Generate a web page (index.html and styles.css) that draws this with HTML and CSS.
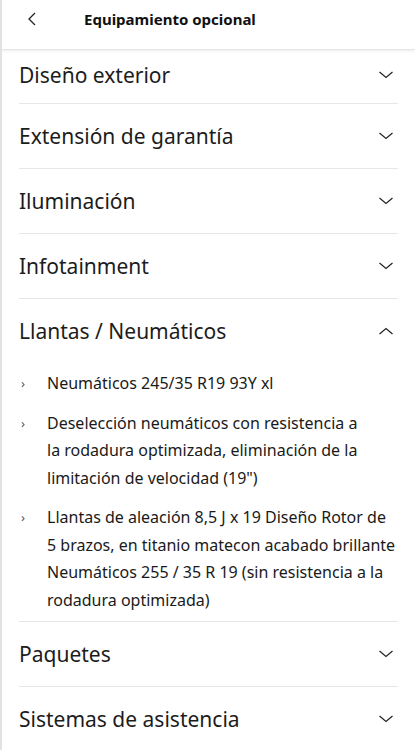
FILE: index.html
```html
<!DOCTYPE html>
<html lang="es">
<head>
    <meta charset="UTF-8">
    <meta name="viewport" content="width=device-width, initial-scale=1.0">
    <title>Equipamiento opcional</title>
    <link rel="stylesheet" href="styles.css">
</head>
<body>
    <header class="top-bar">
        <button class="back" aria-label="Volver">
            <svg width="10" height="14" viewBox="0 0 10 14"><path d="M8 1 L2 7 L8 13" fill="none" stroke="#222" stroke-width="1.3"/></svg>
        </button>
        <h1>Equipamiento opcional</h1>
    </header>

    <main class="list">
        <div class="section first">
            <div class="section-head">
                <span>Diseño exterior</span>
                <svg class="chev" width="16" height="10" viewBox="0 0 16 10"><path d="M1.5 2 L8 7.5 L14.5 2" fill="none" stroke="#222" stroke-width="1.2"/></svg>
            </div>
        </div>
        <div class="section">
            <div class="section-head">
                <span>Extensión de garantía</span>
                <svg class="chev" width="16" height="10" viewBox="0 0 16 10"><path d="M1.5 2 L8 7.5 L14.5 2" fill="none" stroke="#222" stroke-width="1.2"/></svg>
            </div>
        </div>
        <div class="section">
            <div class="section-head">
                <span>Iluminación</span>
                <svg class="chev" width="16" height="10" viewBox="0 0 16 10"><path d="M1.5 2 L8 7.5 L14.5 2" fill="none" stroke="#222" stroke-width="1.2"/></svg>
            </div>
        </div>
        <div class="section">
            <div class="section-head">
                <span>Infotainment</span>
                <svg class="chev" width="16" height="10" viewBox="0 0 16 10"><path d="M1.5 2 L8 7.5 L14.5 2" fill="none" stroke="#222" stroke-width="1.2"/></svg>
            </div>
        </div>
        <div class="section open">
            <div class="section-head">
                <span>Llantas / Neumáticos</span>
                <svg class="chev" width="16" height="10" viewBox="0 0 16 10"><path d="M1.5 8 L8 2.5 L14.5 8" fill="none" stroke="#222" stroke-width="1.2"/></svg>
            </div>
            <ul class="items">
                <li>Neumáticos 245/35 R19 93Y xl</li>
                <li>Deselección neumáticos con resistencia a<br>la rodadura optimizada, eliminación de la limitación de velocidad (19")</li>
                <li>Llantas de aleación 8,5 J x 19 Diseño Rotor de 5 brazos, en titanio matecon acabado brillante<br>Neumáticos 255 / 35 R 19 (sin resistencia a la rodadura optimizada)</li>
            </ul>
        </div>
        <div class="section">
            <div class="section-head">
                <span>Paquetes</span>
                <svg class="chev" width="16" height="10" viewBox="0 0 16 10"><path d="M1.5 2 L8 7.5 L14.5 2" fill="none" stroke="#222" stroke-width="1.2"/></svg>
            </div>
        </div>
        <div class="section">
            <div class="section-head">
                <span>Sistemas de asistencia</span>
                <svg class="chev" width="16" height="10" viewBox="0 0 16 10"><path d="M1.5 2 L8 7.5 L14.5 2" fill="none" stroke="#222" stroke-width="1.2"/></svg>
            </div>
        </div>
    </main>
</body>
</html>
```

FILE: styles.css
```css
body {
    margin: 0;
    font-family: 'Noto Sans', sans-serif;
    color: #1a1a1a;
    background: #fff;
    border-left: 2px solid #e2e2e2;
    min-height: 750px;
    box-sizing: border-box;
}

.top-bar {
    height: 50px;
    box-sizing: border-box;
    padding-bottom: 12px;
    display: flex;
    align-items: center;
    border-bottom: 1px solid #e6e6e6;
    box-shadow: 0 1px 3px rgba(0, 0, 0, 0.08);
}

.back {
    background: none;
    border: none;
    padding: 0;
    width: 24px;
    margin-left: 25px;
    margin-right: 33px;
    display: flex;
    align-items: center;
    cursor: pointer;
}

.top-bar h1 {
    margin: 0;
    font-size: 15px;
    font-weight: bold;
    color: #111;
}

.list {
    padding: 0 17px;
}

.section {
    border-bottom: 1px solid #e6e6e6;
}

.section-head {
    height: 64px;
    display: flex;
    align-items: center;
    justify-content: space-between;
    font-size: 21px;
    color: #1c1c1c;
    padding-right: 4px;
}

.section.first .section-head {
    height: 53px;
    padding-bottom: 4px;
    box-sizing: border-box;
}

.items {
    list-style: none;
    margin: 0;
    padding: 7px 0 7px 0;
}

.items li {
    position: relative;
    padding-left: 28px;
    font-size: 16px;
    line-height: 27.5px;
    margin-bottom: 12px;
}

.items li:last-child {
    margin-bottom: 0;
}

.items li::before {
    content: "›";
    position: absolute;
    left: 2px;
    top: 0;
    font-size: 13px;
    color: #555;
}
```
